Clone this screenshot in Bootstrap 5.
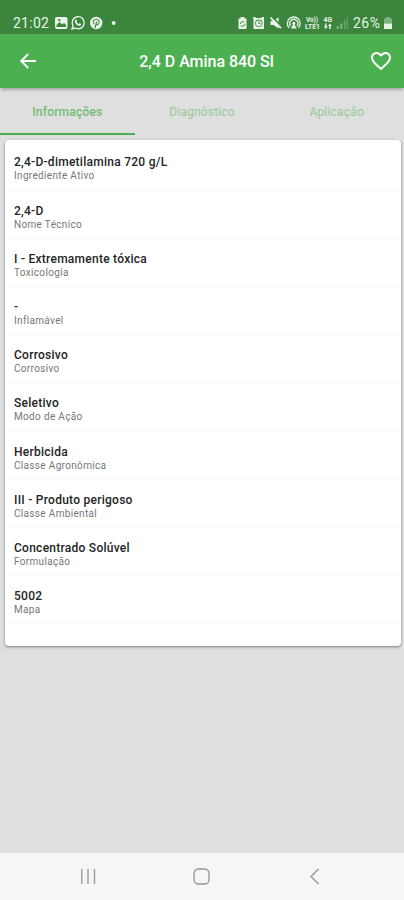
<!DOCTYPE html>
<html lang="pt-BR">
<head>
<meta charset="utf-8">
<meta name="viewport" content="width=device-width, initial-scale=1">
<title>2,4 D Amina 840 Sl</title>
<link href="https://cdn.jsdelivr.net/npm/bootstrap@5.3.0/dist/css/bootstrap.min.css" rel="stylesheet">
<style>
body{font-family:Roboto,"Liberation Sans",sans-serif;background:#dfdfdf;height:900px;overflow:hidden}
svg{display:block;flex:none}
.statusbar{height:34px;background:#3b853d;color:#e9f5e9;padding:11px 12px 0 13px}
.clock{font-size:14px;letter-spacing:.25px;line-height:24px;width:41px}
.pct{font-size:14px;letter-spacing:.5px;line-height:24px;width:31px}
.sys-icons{height:24px}
.appbar{height:54px;background:#4caf50;color:#fff;padding:0 12px 0 19px;box-shadow:0 3px 3px -1px rgba(0,0,0,.25)}
.apptitle{font-size:16px;font-weight:500;line-height:20px;letter-spacing:-.03px;padding:2px 0 0 6px}
.tabs{height:47px}
.tabs .nav-link{color:#96c998;font-size:12px;font-weight:400;line-height:16px;height:47px;padding:16px 0 0;letter-spacing:.18px;border-bottom:2px solid transparent;border-radius:0}
.tabs .nav-link.active{color:#72bd75;border-color:#4caf50;font-weight:500;letter-spacing:.2px}
.sheet{margin:5px 3px 0 5px;height:506px;border-radius:4px;padding-top:2.6px;box-shadow:0 1px 3px rgba(0,0,0,.45)}
.entry{height:48.2px;padding:12.8px 9px 0;border-bottom:1px solid #f9f9f9}
.entry-title{font-size:12px;font-weight:500;line-height:14px;color:#242424;letter-spacing:.26px}
.entry-sub{font-size:10px;line-height:13px;color:#777;letter-spacing:.33px}
.softkeys{height:47px;background:#f6f6f6;padding-right:4px}
</style>
</head>
<body class="d-flex flex-column m-0">
<div class="statusbar d-flex align-items-start justify-content-between">
  <div class="sys-icons d-flex align-items-center">
    <span class="clock">21:02</span>
    <svg width="64" height="16" viewBox="54 15 64 16" fill="#e9f5e9">
      <rect x="55" y="17" width="12.5" height="12" rx="2"/><path d="M56.5 27v-2l3-3 2.6 2.4L64 23l2 2v2z" fill="#3b853d"/><rect x="58" y="19.2" width="2.4" height="1.7" fill="#3b853d"/>
      <path d="M72 29l1-3.3a6 6 0 1 1 2.4 2.3z" fill="none" stroke="#e9f5e9" stroke-width="1.4"/><path d="M75.3 19.9c.7-.9 1.4-.5 1.8 1l-.7.9c.5 1 1.2 1.7 2.3 2.2l1-.8c1.6.6 1.8 1.2 1 2-1.1 1.1-3 .4-4.4-1s-2-3.2-1-4.300z"/>
      <circle cx="96.200" cy="23" r="6.200"/><path d="M95 28l1.700-6.500M94 24.300c-2-3 0-5.200 2.600-5 3 .2 3.400 3.800 1.300 5.200-1 .7-1.900.3-2.100-.3" fill="none" stroke="#3b853d" stroke-width="1.100"/>
      <circle cx="113.700" cy="23" r="1.900"/>
    </svg>
  </div>
  <div class="sys-icons d-flex align-items-center">
    <svg width="116" height="16" viewBox="237 15 116 16" fill="#e9f5e9">
      <path d="M240.500 17h4v1.500h2v10.500h-8v-10.500h2z"/><path d="M240.300 24a2.300 2.300 0 0 1 4-1.600M244.700 24a2.300 2.300 0 0 1-4 1.600" fill="none" stroke="#3b853d"/>
      <path d="M253.300 19.300v-2.200h3zM264 19.300v-2.200h-3z"/><path d="M253.500 18h10.500v11h-10.500z"/><circle cx="258.800" cy="23.300" r="3.700" fill="#3b853d"/><circle cx="258.800" cy="23.300" r="2.900"/><path d="M258.800 21.300v2.300h1.700" stroke="#3b853d" stroke-width=".9" fill="none"/>
      <path d="M270.500 21h3l5-3.800v11.400l-5-3.500h-3z"/><path d="M271.700 16.600l10 10" stroke="#3b853d" stroke-width="2"/><path d="M270.500 17.600l10.500 10.600" stroke="#e9f5e9" stroke-width="1.700"/>
      <g fill="none" stroke="#e9f5e9" stroke-width="1.300"><path d="M289 27.700a6.400 6.400 0 1 1 9.500 0"/><path d="M290.700 26a4 4 0 1 1 6.200 0"/></g><circle cx="293.800" cy="23.300" r="1.500"/><path d="M293.800 23.500l3 5h-6z"/>
      <g font-family="Roboto,sans-serif" font-weight="700" font-size="7"><text x="306" y="22.400" textLength="12" lengthAdjust="spacingAndGlyphs">Vo))</text><text x="305" y="29" textLength="15" lengthAdjust="spacingAndGlyphs">LTE1</text><text x="323.500" y="22.400" textLength="8.500" lengthAdjust="spacingAndGlyphs">4G</text></g>
      <path d="M325 23.500h1.500v3h1.300l-2 2.500-2-2.500h1.200zM329.200 29v-3h-1.300l2-2.500 2 2.500h-1.200v3z"/>
      <g opacity=".4"><rect x="336.500" y="26" width="2.200" height="3"/><rect x="340.200" y="23.500" width="2.200" height="5.500"/><rect x="343.900" y="20" width="1.800" height="9" opacity=".6"/><rect x="346.600" y="17.500" width="1.400" height="11.500" opacity=".6"/></g>
    </svg>
    <span class="pct">26%</span>
    <svg width="8" height="16" viewBox="384 15 8 16" fill="#e9f5e9"><path d="M386 17h4v1.500h2v5h-8v-5h2z" opacity=".4"/><path d="M384 23.500h8v5.500h-8z"/></svg>
  </div>
</div>
<header class="appbar d-flex align-items-center justify-content-between">
  <svg width="18" height="18" viewBox="0 0 18 18" fill="none" stroke="#fff" stroke-width="1.900"><path d="M17 9H2.700M9.200 2L2.200 9l7 7"/></svg>
  <h1 class="apptitle m-0">2,4 D Amina 840 Sl</h1>
  <svg width="22" height="20" viewBox="1 2 22 20" fill="#fff"><path d="M16.500 3c-1.740 0-3.410.81-4.500 2.090C10.910 3.810 9.240 3 7.500 3 4.420 3 2 5.420 2 8.500c0 3.780 3.400 6.860 8.550 11.540L12 21.350l1.450-1.320C18.600 15.360 22 12.280 22 8.500 22 5.420 19.580 3 16.500 3zm-4.400 15.550l-.1.100-.1-.1C7.140 14.240 4 11.390 4 8.500 4 6.500 5.500 5 7.500 5c1.540 0 3.040.99 3.570 2.360h1.870C13.460 5.990 14.960 5 16.500 5c2 0 3.500 1.500 3.500 3.500 0 2.890-3.140 5.740-7.900 10.050z"/></svg>
</header>
<nav class="tabs nav nav-justified">
  <a class="nav-link active" href="#">Informações</a>
  <a class="nav-link" href="#">Diagnóstico</a>
  <a class="nav-link" href="#">Aplicação</a>
</nav>
<main class="sheet card border-0">
  <div class="entry"><div class="entry-title">2,4-D-dimetilamina 720 g/L</div><div class="entry-sub">Ingrediente Ativo</div></div>
  <div class="entry"><div class="entry-title">2,4-D</div><div class="entry-sub">Nome Técnico</div></div>
  <div class="entry"><div class="entry-title">I - Extremamente tóxica</div><div class="entry-sub">Toxicologia</div></div>
  <div class="entry"><div class="entry-title">-</div><div class="entry-sub">Inflamável</div></div>
  <div class="entry"><div class="entry-title">Corrosivo</div><div class="entry-sub">Corrosivo</div></div>
  <div class="entry"><div class="entry-title">Seletivo</div><div class="entry-sub">Modo de Ação</div></div>
  <div class="entry"><div class="entry-title">Herbicida</div><div class="entry-sub">Classe Agronômica</div></div>
  <div class="entry"><div class="entry-title">III - Produto perigoso</div><div class="entry-sub">Classe Ambiental</div></div>
  <div class="entry"><div class="entry-title">Concentrado Solúvel</div><div class="entry-sub">Formulação</div></div>
  <div class="entry"><div class="entry-title">5002</div><div class="entry-sub">Mapa</div></div>
</main>
<footer class="softkeys mt-auto d-flex justify-content-center align-items-center">
  <svg width="240" height="18" viewBox="80 868 240 18" fill="none" stroke="#949494" stroke-width="1.300"><path d="M81.800 869v15M88 869v15M94.500 869v15"/><rect x="194" y="869" width="15" height="15" rx="4.500"/><path d="M318.500 869l-7.500 7.500 7.500 7.500"/></svg>
</footer>
<script src="https://cdn.jsdelivr.net/npm/bootstrap@5.3.0/dist/js/bootstrap.bundle.min.js"></script>
</body>
</html>
